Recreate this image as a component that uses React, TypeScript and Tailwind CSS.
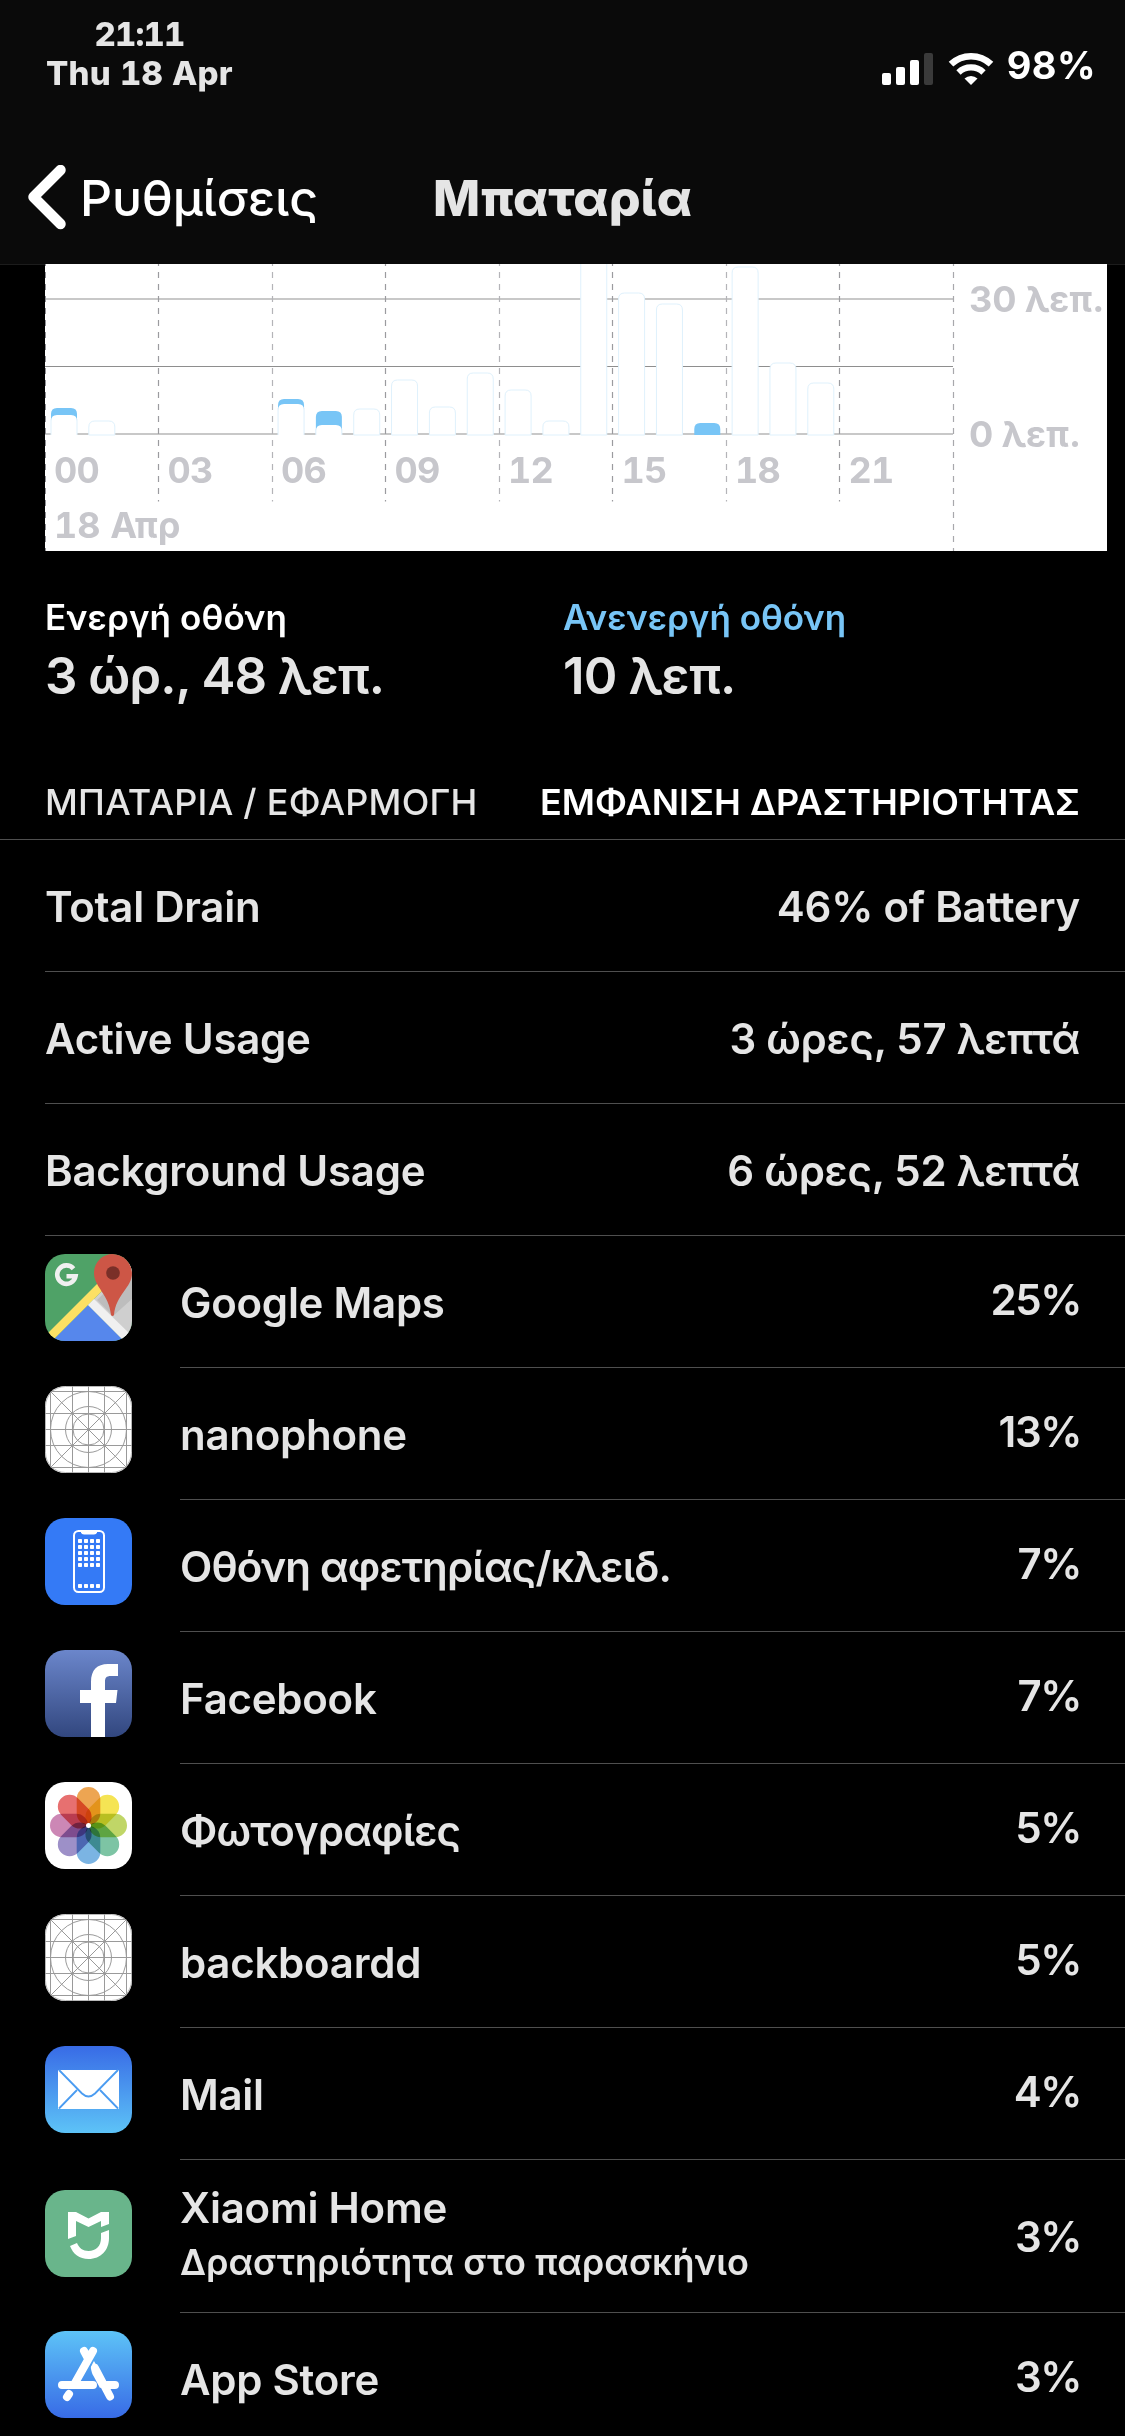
import type { ReactNode } from "react";

interface BarData {
  hour: number;
  top: number;
  inner?: number;
}

interface AppUsage {
  name: string;
  percent: string;
  icon: ReactNode;
  greek?: boolean;
  note?: string;
}

// y values are in chart pixels, the zero line is at 170
const bars: BarData[] = [
  { hour: 0, top: 144, inner: 151 },
  { hour: 1, top: 157 },
  { hour: 6, top: 135, inner: 140 },
  { hour: 7, top: 147, inner: 161 },
  { hour: 8, top: 145 },
  { hour: 9, top: 116 },
  { hour: 10, top: 143 },
  { hour: 11, top: 109 },
  { hour: 12, top: 126 },
  { hour: 13, top: 157 },
  { hour: 14, top: -20 },
  { hour: 15, top: 29 },
  { hour: 16, top: 40 },
  { hour: 17, top: 159, inner: 171 },
  { hour: 18, top: 3 },
  { hour: 19, top: 99 },
  { hour: 20, top: 119 },
];

const hours = ["00", "03", "06", "09", "12", "15", "18", "21"];

const columnTop = (x: number, y: number, w: number) =>
  `M${x} 171V${y + 6}q0 -6 6 -6h${w - 12}q6 0 6 6V171Z`;

function Chart() {
  return (
    <div className="relative ml-[45px] h-[287px] w-[1062px] overflow-hidden bg-white text-[36px] leading-[44px] font-bold text-[#c7c7cc]">
      <svg className="absolute inset-0" width="1062" height="287" viewBox="0 0 1062 287">
        <path d="M0 35H908" stroke="#c8c8c8" strokeWidth="2" />
        <path d="M0 102.5H908" stroke="#8e8e8e" strokeWidth="1" />
        <path d="M0 170H908" stroke="#c8c8c8" strokeWidth="2" />
        {[1, 2, 3, 4, 5, 6, 7].map((i) => (
          <path
            key={i}
            d={`M${Math.floor(i * 113.5)}.5 -4V237.5`}
            stroke={i % 2 ? "#9b9b9f" : "#b4b4b8"}
            strokeWidth="1.2"
            strokeDasharray="6 6"
          />
        ))}
        <path d="M0.5 -4V287" stroke="#8e8e93" strokeWidth="1" strokeDasharray="6 6" />
        <path d="M908.5 -4V287" stroke="#a8a8ac" strokeWidth="1.2" strokeDasharray="6 6" />
        {bars.map((bar) => {
          const x = 6 + bar.hour * 37.84;
          if (bar.inner === undefined) {
            return <path key={bar.hour} d={columnTop(x, bar.top, 26)} fill="#fff" stroke="#dff1fc" />;
          }
          return (
            <g key={bar.hour}>
              <path d={columnTop(x, bar.top, 26)} fill="#78c5f6" />
              {bar.inner < 170 && <path d={columnTop(x, bar.inner, 26)} fill="#fff" />}
              {bar.inner < 170 && <path d={`M${x} 171V${bar.inner + 4}M${x + 26} 171V${bar.inner + 4}`} stroke="#dff1fc" />}
            </g>
          );
        })}
      </svg>
      <div className="relative flex h-full">
        <div className="flex w-[908px] shrink-0 flex-col pt-[184px]">
          <div className="grid grid-cols-8 tracking-[-0.8px] tabular-nums">
            {hours.map((hour) => (
              <span key={hour} className="pl-[9px]">
                {hour}
              </span>
            ))}
          </div>
          <span className="mt-[11px] pl-[9px] tabular-nums">18 Απρ</span>
        </div>
        <div className="flex flex-col pt-[13px] pl-[16px] whitespace-nowrap">
          <span>30 λεπ.</span>
          <span className="mt-[91px]">0 λεπ.</span>
        </div>
      </div>
    </div>
  );
}

function IconTile({ children }: { children: ReactNode }) {
  return (
    <svg
      className="h-[87px] w-[87px] shrink-0 rounded-[20px]"
      viewBox="0 0 87 87"
      fill="none"
    >
      {children}
    </svg>
  );
}

function MapsIcon() {
  return (
    <IconTile>
      <rect width="87" height="87" fill="#4fa267" />
      <path d="M43 51L87 7V87H79Z" fill="#cfcfcf" />
      <path d="M68 62L52 46L87 12V45Z" fill="#bdbdbd" />
      <path d="M43 51L10 84V87H79Z" fill="#5687ec" />
      <path d="M0 82L54 28L60 34L6 88Z" fill="#fbe064" />
      <path d="M43 51L49 45L87 82L79 87Z" fill="#f0f0f0" />
      <path
        d="M68 0C57 0 49 8.500 49 19C49 33 64 40 66 61Q67.500 63 69 61C71 40 87 34 87 19C87 8.500 79 0 68 0Z"
        fill="#cd5646"
      />
      <circle cx="68" cy="19" r="6.800" fill="#7a2f28" />
      <path d="M28.500 14.700A9.200 9.200 0 1 0 30.500 22.300H21.500" stroke="#f0f0f0" strokeWidth="4.600" />
    </IconTile>
  );
}

function BlankIcon() {
  return (
    <IconTile>
      <rect width="87" height="87" fill="#fff" />
      <g stroke="#9a9a9a" strokeWidth="1">
        <path d="M5.500 0V87M27.500 0V87M43.500 0V87M59.500 0V87M81.500 0V87" />
        <path d="M0 5.500H87M0 27.500H87M0 43.500H87M0 59.500H87M0 81.500H87" />
        <path d="M3 3L84 84M84 3L3 84" />
        <circle cx="43.500" cy="43.500" r="38" />
        <circle cx="43.500" cy="43.500" r="23" />
        <circle cx="43.500" cy="43.500" r="15.500" />
      </g>
      <rect x="0.500" y="0.500" width="86" height="86" rx="20" stroke="#a5a5a5" strokeWidth="0.800" />
    </IconTile>
  );
}

function HomeScreenIcon() {
  const rows = [23, 29, 35, 41, 47, 68];
  return (
    <IconTile>
      <rect width="87" height="87" fill="#347af6" />
      <rect x="29" y="13" width="30" height="61" rx="4.500" stroke="#fff" strokeWidth="2" />
      <path d="M36 13H52V14.500Q51.500 16.500 49 16.500H39Q36.500 16.500 36 14.500Z" fill="#fff" />
      {rows.map((y) =>
        [35, 41, 47, 53].map((x) => (
          <rect key={`${x}-${y}`} x={x - 2} y={y - 2} width="4" height="4" rx="0.800" fill="#fff" />
        ))
      )}
    </IconTile>
  );
}

function FacebookIcon() {
  return (
    <IconTile>
      <defs>
        <linearGradient id="facebook" x1="0" y1="0" x2="0" y2="1">
          <stop stopColor="#6b86cb" />
          <stop offset="1" stopColor="#32477f" />
        </linearGradient>
      </defs>
      <rect width="87" height="87" fill="url(#facebook)" />
      <path
        d="M46 87V53H35V40H46V32C46 20 52 14 63 14H73V26H66C61 26 60 28 60 32V40H72.500L71 53H60V87Z"
        fill="#fff"
      />
    </IconTile>
  );
}

function PhotosIcon() {
  const petals = ["#eda552", "#f5e454", "#c0d667", "#7dc4a4", "#7bb4e3", "#9d90c8", "#cc87b5", "#e77070"];
  return (
    <IconTile>
      <rect width="87" height="87" fill="#fff" />
      {petals.map((color, i) => (
        <rect
          key={color}
          x="31.700"
          y="5"
          width="23.600"
          height="38"
          rx="11.800"
          fill={color}
          className="mix-blend-multiply"
          transform={`rotate(${i * 45} 43.500 43.500)`}
        />
      ))}
      <circle cx="43.500" cy="43.500" r="2.500" fill="#fff" />
    </IconTile>
  );
}

function MailIcon() {
  return (
    <IconTile>
      <defs>
        <linearGradient id="mail" x1="0" y1="0" x2="0" y2="1">
          <stop stopColor="#386be6" />
          <stop offset="1" stopColor="#5dc3f7" />
        </linearGradient>
      </defs>
      <rect width="87" height="87" fill="url(#mail)" />
      <rect x="13" y="24" width="61" height="39" rx="1" fill="#fff" />
      <g stroke="#4b9cf1" strokeWidth="1.800">
        <path d="M14 24L37 47.500Q43.500 53.500 50 47.500L73 24" />
        <path d="M14 62.500L32 44M73 62.500L55 44" />
      </g>
    </IconTile>
  );
}

function XiaomiIcon() {
  return (
    <IconTile>
      <rect width="87" height="87" fill="#69b58b" />
      <path d="M23 49V22H31L43.500 28.500L56 22H64V34L56 37V31L43.500 37L31 31V46Z" fill="#fff" />
      <path d="M56 43L64 40V48C64 60 56 69 43.500 69C34.500 69 28 64 25 56L32 53C34 58 38 61 43.500 61C51 61 56 56 56 48Z" fill="#fff" />
    </IconTile>
  );
}

function AppStoreIcon() {
  return (
    <IconTile>
      <defs>
        <linearGradient id="appstore" x1="0" y1="0" x2="0" y2="1">
          <stop stopColor="#5dc3f7" />
          <stop offset="1" stopColor="#386be6" />
        </linearGradient>
      </defs>
      <rect width="87" height="87" fill="url(#appstore)" />
      <g stroke="#fff" strokeWidth="8" strokeLinecap="round">
        <path d="M48 20L30 52M39 20L42.500 26.500" />
        <path d="M17 54H48M62 54H70" />
        <path d="M50 37L65 65.500" />
        <path d="M24 63L22 66" />
      </g>
      <path d="M49 30C45.500 35 45.500 40 48.500 45L55 57L62 54Z" fill="#fff" />
    </IconTile>
  );
}

const totals = [
  { label: "Total Drain", value: "46% of Battery" },
  { label: "Active Usage", value: "3 ώρες, 57 λεπτά" },
  { label: "Background Usage", value: "6 ώρες, 52 λεπτά" },
];

const apps: AppUsage[] = [
  { name: "Google Maps", percent: "25%", icon: <MapsIcon /> },
  { name: "nanophone", percent: "13%", icon: <BlankIcon /> },
  { name: "Οθόνη αφετηρίας/κλειδ.", percent: "7%", icon: <HomeScreenIcon />, greek: true },
  { name: "Facebook", percent: "7%", icon: <FacebookIcon /> },
  { name: "Φωτογραφίες", percent: "5%", icon: <PhotosIcon />, greek: true },
  { name: "backboardd", percent: "5%", icon: <BlankIcon /> },
  { name: "Mail", percent: "4%", icon: <MailIcon /> },
  { name: "Xiaomi Home", percent: "3%", icon: <XiaomiIcon />, note: "Δραστηριότητα στο παρασκήνιο" },
  { name: "App Store", percent: "3%", icon: <AppStoreIcon /> },
];

function StatusBar() {
  return (
    <div className="flex h-[132px] justify-between pr-[29px] pl-[46px]">
      <div className="flex flex-col items-center pt-[15px] text-[33px] leading-[39px] font-extrabold text-[#e5e5e5] tabular-nums">
        <span className="tracking-[-0.8px]">21:11</span>
        <span className="tracking-[0.2px]">Thu 18 Apr</span>
      </div>
      <div className="flex items-start pt-[41px] text-white">
        <svg className="mt-[11px] mr-[13px] h-[34px] w-[112px] shrink-0" viewBox="0 0 112 34" fill="none">
          <rect x="0" y="21" width="9" height="12" rx="2" fill="#fff" />
          <rect x="14" y="15" width="9" height="18" rx="2" fill="#fff" />
          <rect x="28" y="8" width="9" height="25" rx="2" fill="#fff" />
          <rect x="42" y="1" width="9" height="32" rx="2" fill="#3a3a3a" />
          <path d="M69 12.200A29 29 0 0 1 109 12.200" stroke="#fff" strokeWidth="6.600" />
          <path d="M76.500 20.500A18 18 0 0 1 101.500 20.500" stroke="#fff" strokeWidth="6.200" />
          <path d="M82.500 26.500A9.500 9.500 0 0 1 95.500 26.500L89 33Z" fill="#fff" />
        </svg>
        <span className="text-[38px] leading-[48px] font-bold tracking-[0.4px]">98%</span>
      </div>
    </div>
  );
}

export default function App() {
  return (
    <div className="flex h-[2436px] w-[1125px] flex-col overflow-hidden bg-black font-['Inter','Noto_Sans',sans-serif] text-[#e5e5e5]">
      <header className="h-[265px] shrink-0 border-b border-[#1c1c1c] bg-[#0a0a0a]">
        <StatusBar />
        <div className="grid h-[130px] grid-cols-[1fr_auto_1fr] items-center pt-[2px] text-[50px] leading-[60px]">
          <div className="flex items-center pl-[26px] font-medium text-white">
            <svg className="mr-[13px] h-[66px] w-[41px]" viewBox="0 0 41 66" fill="none">
              <path d="M34.500 5L7.500 32L34.500 59" stroke="#fff" strokeWidth="10.500" strokeLinecap="round" strokeLinejoin="round" />
            </svg>
            <span className="tracking-[-0.2px]">Ρυθμίσεις</span>
          </div>
          <h1 className="font-extrabold">Μπαταρία</h1>
        </div>
      </header>

      <div className="-mt-px shrink-0">
        <Chart />
      </div>

      <section className="grid h-[221px] shrink-0 grid-cols-[518px_1fr] pt-[44px] pl-[45px] font-semibold">
        <div>
          <p className="text-[35px] leading-[44px] tracking-[0.1px] text-white">Ενεργή οθόνη</p>
          <p className="mt-[7px] text-[51px] leading-[60px] tracking-[-1px]">3 ώρ., 48 λεπ.</p>
        </div>
        <div>
          <p className="text-[35px] leading-[44px] text-[#78c5f6]">Ανενεργή οθόνη</p>
          <p className="mt-[7px] text-[51px] leading-[60px] tracking-[-0.8px]">10 λεπ.</p>
        </div>
      </section>

      <div className="flex h-[68px] shrink-0 items-center justify-between border-b border-[#4f4f4f] pr-[45px] pb-[8px] pl-[45px] text-[36px]">
        <span className="font-medium tracking-[0.25px]">ΜΠΑΤΑΡΙΑ / ΕΦΑΡΜΟΓΗ</span>
        <span className="font-semibold text-white">ΕΜΦΑΝΙΣΗ ΔΡΑΣΤΗΡΙΟΤΗΤΑΣ</span>
      </div>

      {totals.map((row) => (
        <div
          key={row.label}
          className="ml-[45px] flex h-[132px] shrink-0 items-center justify-between border-b border-[#4f4f4f] pt-px pr-[45px] text-[42px] font-semibold tracking-[-0.25px]"
        >
          <span>{row.label}</span>
          <span>{row.value}</span>
        </div>
      ))}

      {apps.map((app) => (
        <div key={app.name} className={`flex shrink-0 pl-[45px] ${app.note ? "h-[153px]" : "h-[132px]"}`}>
          <div className={`w-[135px] shrink-0 ${app.note ? "pt-[30px]" : "pt-[18px]"}`}>{app.icon}</div>
          <div className="flex flex-1 items-center justify-between border-b border-[#4f4f4f] pr-[44px] text-[42px] font-semibold tracking-[-0.25px]">
            <div className={app.note ? "pb-px" : "pt-[3px]"}>
              <p className={app.greek ? "leading-[52px] tracking-[-0.85px]" : "leading-[52px]"}>{app.name}</p>
              {app.note && <p className="text-[36px] leading-[56px] tracking-[0px]">{app.note}</p>}
            </div>
            <span className={app.note ? "tracking-[-1.4px]" : "pb-[4px] tracking-[-1.4px]"}>{app.percent}</span>
          </div>
        </div>
      ))}
    </div>
  );
}
